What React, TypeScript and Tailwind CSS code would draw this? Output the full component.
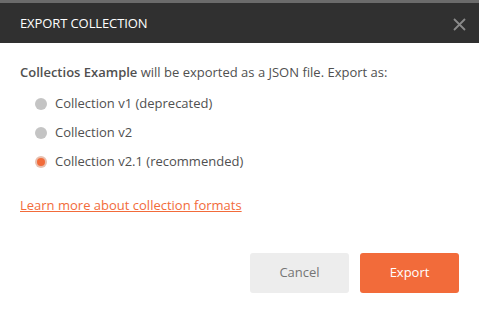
export default function App() {
  const options = [
    { label: "Collection v1 (deprecated)", checked: false },
    { label: "Collection v2", checked: false },
    { label: "Collection v2.1 (recommended)", checked: true },
  ];

  return (
    <div
      className="w-[479px] h-[312px] bg-white flex flex-col overflow-hidden"
      style={{ fontFamily: '"Open Sans", "Liberation Sans", sans-serif' }}
    >
      {/* Header */}
      <div className="h-[3px] bg-[#6b6b6b]" />
      <div className="h-[40px] bg-[#303030] flex items-center justify-between pl-5 pr-[13px] pt-[2px]">
        <span className="text-white text-[13px] font-medium tracking-[-0.1px]">
          EXPORT COLLECTION
        </span>
        <svg width="13" height="13" viewBox="0 0 13 13" className="text-[#8a8a8a]">
          <path d="M1 1L12 12M12 1L1 12" stroke="currentColor" strokeWidth="1.8" />
        </svg>
      </div>

      {/* Body */}
      <div className="flex-1 flex flex-col px-5 pt-[19px]">
        <p className="text-[13px] text-[#505050] leading-5">
          <span className="font-semibold">Collectios Example</span> will be
          exported as a JSON file. Export as:
        </p>

        <div className="flex flex-col gap-[8px] mt-[11px] pl-[15px]">
          {options.map((o) => (
            <div key={o.label} className="flex items-center gap-[8px] h-[21px]">
              {o.checked ? (
                <span className="w-[12px] h-[12px] rounded-full bg-[#e8c0b0] flex items-center justify-center">
                  <span className="w-[8px] h-[8px] rounded-full bg-[#f26b3a]" />
                </span>
              ) : (
                <span className="w-[12px] h-[12px] rounded-full bg-[#c4c4c4]" />
              )}
              <span className="text-[13px] text-[#505050]">{o.label}</span>
            </div>
          ))}
        </div>

        <a className="mt-[24px] text-[13px] text-[#f26b3a] underline w-fit">
          Learn more about collection formats
        </a>

        <div className="flex justify-end gap-[11px] mt-[37px]">
          <button className="w-[99px] h-[40px] rounded-[3px] bg-[#ededed] text-[#757575] text-[13px]">
            Cancel
          </button>
          <button className="w-[99px] h-[40px] rounded-[3px] bg-[#f26b3a] text-white text-[13px]">
            Export
          </button>
        </div>
      </div>
    </div>
  );
}
